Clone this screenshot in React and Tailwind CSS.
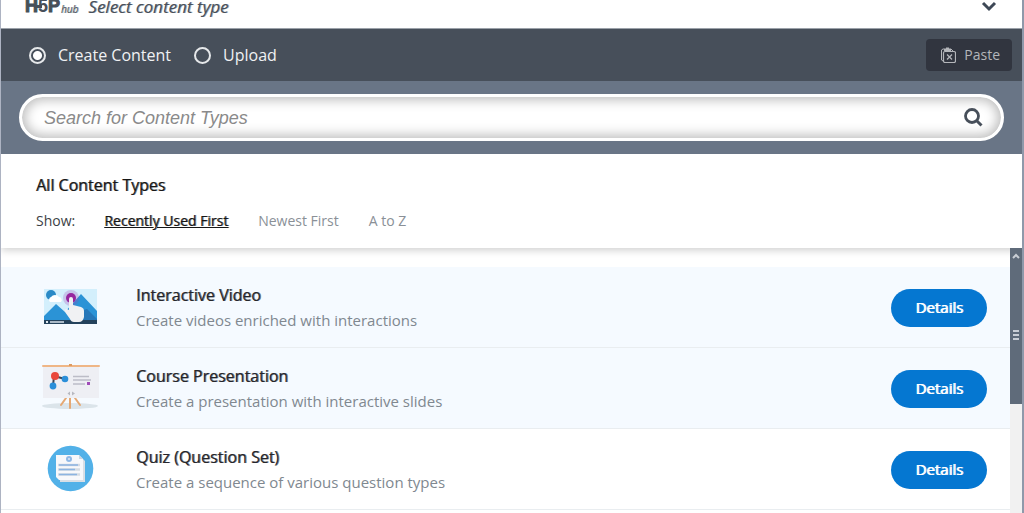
import React, { useState } from 'react';

const HubLogo = () => (
  <svg
    viewBox="0 0 37 14"
    className="w-[37px] h-[14px] font-['Liberation_Sans',sans-serif] text-lg font-bold not-italic"
    fill="#474f5a"
    role="img"
    aria-label="H5P"
  >
    <rect x="10" y="6" width="8" height="3" />
    <text x="1" y="13" stroke="#474f5a">H</text>
    <text x="14" y="13">5</text>
    <text x="24" y="13" stroke="#474f5a">P</text>
  </svg>
);

const InteractiveVideoIcon = () => (
  <svg viewBox="0 1 60 60" className="w-[60px] h-[60px]" aria-hidden="true">
    <rect x="3" y="12" width="53" height="35" fill="#d3effc" />
    <path d="M3 39 L15 27 L24 35 L40 17 L56 34 V44 H3 Z" fill="#2b93d6" />
    <path d="M40 34 L46 32 L56 42 V44 H42 Z" fill="#2677b8" />
    <circle cx="10" cy="18" r="5" fill="#2b8ac6" />
    <path d="M9 25 a3 3 0 0 1 1 -5 a5 5 0 0 1 8 0 a3 3 0 0 1 2 5 Z" fill="#ffffff" />
    <rect x="3" y="43" width="53" height="4" fill="#24425c" />
    <rect x="5" y="44" width="2" height="2" fill="#dfe7ee" />
    <rect x="9" y="44" width="14" height="2" fill="#a9b8c6" />
    <circle cx="30" cy="21" r="8" fill="#a13fb0" opacity="0.25" />
    <circle cx="30" cy="21" r="5" fill="#96269f" />
    <path
      d="M28 22 a2 2 0 0 1 4 0 V28 l8 2 q3 1 3 4 V40 q-1 5 -5 5 H33 q-3 0 -4 -3 L24 35 q-1 -3 2 -3 l2 1 Z"
      fill="#f0f1f3"
    />
  </svg>
);

const CoursePresentationIcon = () => (
  <svg viewBox="0 1 60 60" className="w-[60px] h-[60px]" aria-hidden="true">
    <ellipse cx="29" cy="48" rx="28" ry="3" fill="#dbe4ea" />
    <path d="M25 40 L20 47 M34 40 L39 47 M29 40 V50" stroke="#e5a873" strokeWidth="2" strokeLinecap="round" />
    <rect x="2" y="9" width="56" height="31" fill="#eeeff4" />
    <rect x="1" y="7" width="58" height="2" rx="1" fill="#efb686" />
    <rect x="28" y="6" width="3" height="2" fill="#dd9a60" />
    <path d="M13 18 L24 21 M13 18 L12 28" stroke="#3b4657" strokeWidth="2" />
    <circle cx="14" cy="18" r="4" fill="#e9483c" />
    <circle cx="24" cy="21" r="3.3" fill="#2b8fd9" />
    <circle cx="12" cy="28" r="3.4" fill="#2b8fd9" />
    <path d="M32 18.500 H48 M32 22 H50 M32 26 H44" stroke="#bcbdc7" strokeWidth="1.500" />
    <rect x="46" y="24" width="3" height="3" fill="#a04cb8" />
    <path d="M29 33.500 L26.500 35.500 L29 37.500 Z M31 33.500 L34 35.500 L31 37.500 Z" fill="#b7b8c0" />
  </svg>
);

const QuizIcon = () => (
  <svg viewBox="0 1 60 60" className="w-[60px] h-[60px]" aria-hidden="true">
    <circle cx="29.500" cy="29.500" r="22.800" fill="#52b1e8" />
    <path d="M19 20 H42 L44 22 V43 H19 Z" fill="#d9dfe6" />
    <path d="M15 16 H38 L42 20 V41 H18 L15 38 Z" fill="#f7f8fb" />
    <path d="M38 16 L42 20 H38 Z" fill="#cbd6e2" />
    <circle cx="28" cy="20" r="3" fill="#8fb8e6" />
    <circle cx="28" cy="20" r="1" fill="#dbe8f7" />
    <path d="M17 26 H39 M17 30.500 H39 M17 35.500 H39" stroke="#d5dbe3" strokeWidth="2.500" />
    <path d="M18 26 H37 M18 30.500 H34 M18 35.500 H36" stroke="#8cb4e2" strokeWidth="1.300" />
  </svg>
);

const contentTypes = [
  {
    id: 'video',
    title: 'Interactive Video',
    description: 'Create videos enriched with interactions',
    icon: InteractiveVideoIcon,
    used: true,
  },
  {
    id: 'presentation',
    title: 'Course Presentation',
    description: 'Create a presentation with interactive slides',
    icon: CoursePresentationIcon,
    used: true,
  },
  {
    id: 'quiz',
    title: 'Quiz (Question Set)',
    description: 'Create a sequence of various question types',
    icon: QuizIcon,
    used: false,
  },
];

const sortOptions = ['Recently Used First', 'Newest First', 'A to Z'];

function ModeRadio({ value, label, mode, onChange }) {
  return (
    <label className="flex items-center gap-3 text-base text-[#f0f1f3] cursor-pointer">
      <input
        type="radio"
        name="mode"
        value={value}
        checked={mode === value}
        onChange={() => onChange(value)}
        className="appearance-none w-[17px] h-[17px] rounded-full border-2 border-[#e6e8ea] checked:bg-[radial-gradient(circle,#ffffff_4px,transparent_5px)]"
      />
      {label}
    </label>
  );
}

function ContentTypeRow({ type }) {
  const Icon = type.icon;

  return (
    <li
      className={`flex items-center h-[81px] pt-px pl-10 pr-[23px] border-b border-[#e9edf0] ${
        type.used ? 'bg-[#f5faff]' : 'bg-white'
      }`}
    >
      <Icon />
      <div className="flex-1 ml-[35px]">
        <h3 className="text-base leading-6 text-[#24252a] [text-shadow:1px_0_0_#24252a99]">{type.title}</h3>
        <p className="text-[15px] leading-[26px] text-[#808890]">{type.description}</p>
      </div>
      <button
        type="button"
        className="w-24 h-[38px] rounded-full bg-[#0577d1] text-white text-[15px] [text-shadow:1px_0_0_#ffffff]"
      >
        Details
      </button>
    </li>
  );
}

function App() {
  const [mode, setMode] = useState('create');
  const [sort, setSort] = useState(sortOptions[0]);
  const [query, setQuery] = useState('');

  return (
    <div className="h-screen flex flex-col overflow-hidden bg-white border-l border-l-[#adb3c2] border-r-2 border-r-[#8f99aa] font-['Open_Sans',sans-serif]">
      {/* Hub header */}
      <header className="shrink-0 h-[29px] flex items-end justify-between pl-[23px] pr-[25px] pb-2 border-b border-[#9ba1a9] text-[#474f5a]">
        <div className="flex items-baseline leading-[22px] italic">
          <HubLogo />
          <span className="text-[10px] [text-shadow:1px_0_0_#474f5a80]">hub</span>
          <span className="ml-[10px] text-[17px] [text-shadow:1px_0_0_#474f5a80]">Select content type</span>
        </div>
        <button type="button" aria-label="Toggle content types" className="mb-[6px]">
          <svg viewBox="0 0 16 16" className="w-4 h-4" aria-hidden="true">
            <path d="M2 5 L8 11 L14 5" fill="none" stroke="#3d4856" strokeWidth="3" />
          </svg>
        </button>
      </header>

      {/* Create / upload bar */}
      <div className="shrink-0 h-[52px] flex items-center justify-between pl-7 pr-[10px] bg-[#474f5a]">
        <div className="flex gap-[23px]">
          <ModeRadio value="create" label="Create Content" mode={mode} onChange={setMode} />
          <ModeRadio value="upload" label="Upload" mode={mode} onChange={setMode} />
        </div>
        <button type="button" className="flex items-center gap-2 h-8 pl-[14px] pr-3 rounded-sm bg-[#31353f] text-sm text-[#b4b6ba]">
          <svg viewBox="0 0 16 16" className="w-4 h-4" fill="none" stroke="#b4b6ba" aria-hidden="true">
            <path d="M3 14 L1.500 13 V3 L3 2 H11 L13 4" />
            <path d="M4 3 H11 M6 1.500 H9" strokeWidth="2" />
            <rect x="3.500" y="4.500" width="12" height="11" rx="1.500" strokeWidth="1.200" />
            <path d="M7 7.500 L12 12.500 M12 7.500 L7 12.500" strokeWidth="1.300" />
          </svg>
          Paste
        </button>
      </div>

      {/* Search */}
      <div className="shrink-0 h-[73px] px-[18px] pt-[13px] bg-[#697586]">
        <div className="h-[47px] flex items-center justify-between pl-[22px] pr-[18px] rounded-full border-3 border-white bg-white shadow-[inset_0_0_12px_3px_#bdbdbd]">
          <input
            type="text"
            aria-label="Search for Content Types"
            placeholder="Search for Content Types"
            value={query}
            onChange={(e) => setQuery(e.target.value)}
            className="flex-1 bg-transparent outline-none font-['Liberation_Sans',sans-serif] text-lg italic text-[#474f5a] placeholder:text-[#8a8a8a]"
          />
          <button type="button" aria-label="Search">
            <svg viewBox="0 0 20 20" className="w-5 h-5" fill="none" stroke="#474f5a" aria-hidden="true">
              <circle cx="9" cy="8" r="6.500" strokeWidth="2.800" />
              <path d="M13.500 12.500 L18.500 17.500" strokeWidth="3" />
            </svg>
          </button>
        </div>
      </div>

      {/* Sorting */}
      <section className="shrink-0 h-[94px] pl-[35px] pt-[18px] bg-white z-10 shadow-[0_2px_8px_rgba(0,0,0,0.2)] [clip-path:inset(0_0_-12px_0)]">
        <h2 className="text-base leading-[26px] text-[#161616] [text-shadow:1px_0_0_#16161699]">All Content Types</h2>
        <div className="mt-3 flex items-center text-sm leading-[22px]">
          <span className="mr-[29px] text-[#3c3f45]">Show:</span>
          <div className="flex gap-[30px]">
            {sortOptions.map((option) => (
              <button
                key={option}
                type="button"
                onClick={() => setSort(option)}
                className={
                  sort === option ? 'underline text-[#161616] [text-shadow:1px_0_0_#16161699]' : 'text-[#8a9097]'
                }
              >
                {option}
              </button>
            ))}
          </div>
        </div>
      </section>

      {/* Content type list */}
      <div className="flex-1 min-h-0 flex">
        <ul className="flex-1 pt-[19px] overflow-hidden">
          {contentTypes.map((type) => (
            <ContentTypeRow key={type.id} type={type} />
          ))}
        </ul>
        <div className="relative z-20 w-3 bg-[#f1f1f1]">
          <div className="h-[59%] pt-1 flex flex-col items-center bg-[#5f6b7a]">
            <svg viewBox="0 0 8 8" className="w-2 h-2" aria-hidden="true">
              <path d="M1 6 L4 3 L7 6" fill="none" stroke="#c9ced5" strokeWidth="2" />
            </svg>
            <svg viewBox="0 0 8 10" className="mt-[70px] w-2 h-[10px]" aria-hidden="true">
              <path d="M1 1 H7 M1 5 H7 M1 9 H7" stroke="#c9ced5" strokeWidth="2" />
            </svg>
          </div>
        </div>
      </div>
    </div>
  );
}

export default App;
